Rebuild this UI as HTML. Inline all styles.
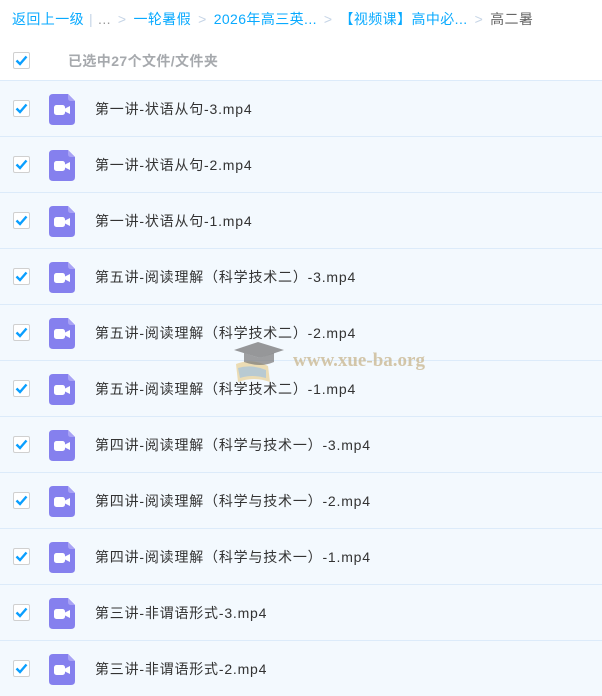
<!DOCTYPE html>
<html><head><meta charset="utf-8"><style>
body{margin:0;width:602px;height:685px;overflow:hidden;background:#fff;font-family:"Liberation Sans","Noto Sans CJK SC",sans-serif;position:relative}
.bc{position:absolute;left:12px;top:9px;font-size:14px;color:#09aaff;white-space:nowrap;letter-spacing:0.4px}
.bc .g{color:#c5d4e6;margin:0 7px}
.bc .d{color:#666}
.cb{position:absolute;width:15px;height:15px;border:1px solid #d0d0d0;background:#fff;border-radius:2px}
.cb svg{position:absolute;left:1px;top:2px}
.sel{position:absolute;left:68px;top:51px;font-size:14px;color:#a6a9ad;font-weight:bold;letter-spacing:0.4px}
.row{position:absolute;left:0;width:602px;height:55px;background:#f3f9fe;border-top:1px solid #dcebfa}
.row .cb{left:13px;top:19px}
.ic{position:absolute;left:49px;top:13px;width:26px;height:31px}
.row .t{position:absolute;left:95px;top:18px;font-size:14px;color:#333;letter-spacing:0.8px}
.wm{position:absolute;left:293px;top:350px;font-family:"Liberation Serif",serif;font-weight:bold;font-size:19px;color:rgba(200,180,140,0.75)}
</style></head><body>
<div class="bc">返回上一级<span class="g" style="margin:0 5px">|</span><span style="color:#999">...</span><span class="g">&gt;</span>一轮暑假<span class="g">&gt;</span>2026年高三英...<span class="g">&gt;</span>【视频课】高中必...<span class="g">&gt;</span><span class="d">高二暑</span></div>
<div class="cb" style="left:13px;top:52px"><svg width="13" height="11" viewBox="0 0 13 11"><path d="M1.5 5.5 L5 9 L11.5 1.5" stroke="#0a9fff" stroke-width="2.4" fill="none"/></svg></div>
<div class="sel">已选中27个文件/文件夹</div>
<div id="rows"></div>
<div class="wm">www.xue-ba.org</div>
<svg style="position:absolute;left:232px;top:338px" width="56" height="50" viewBox="0 0 56 50"><path d="M4 26 Q20 20 36 28 L38 44 Q22 38 6 44Z" fill="rgba(230,200,130,0.6)"/><path d="M6 30 Q20 26 34 32 L34 40 Q20 36 8 40Z" fill="rgba(150,190,230,0.6)"/><path d="M2 12 L26 4 L52 12 L28 20Z" fill="rgba(110,110,110,0.7)"/><path d="M12 15 L12 24 Q28 30 42 24 L42 15 L28 20Z" fill="rgba(120,120,120,0.7)"/></svg>
<script>
var n=["第一讲-状语从句-3.mp4","第一讲-状语从句-2.mp4","第一讲-状语从句-1.mp4","第五讲-阅读理解（科学技术二）-3.mp4","第五讲-阅读理解（科学技术二）-2.mp4","第五讲-阅读理解（科学技术二）-1.mp4","第四讲-阅读理解（科学与技术一）-3.mp4","第四讲-阅读理解（科学与技术一）-2.mp4","第四讲-阅读理解（科学与技术一）-1.mp4","第三讲-非谓语形式-3.mp4","第三讲-非谓语形式-2.mp4"];
var h="";n.forEach(function(t,i){h+='<div class="row" style="top:'+(80+i*56)+'px"><div class="cb"><svg width="13" height="11" viewBox="0 0 13 11"><path d="M1.5 5.5 L5 9 L11.5 1.5" stroke="#0a9fff" stroke-width="2.4" fill="none"/></svg></div><svg class="ic" viewBox="0 0 26 31"><path d="M4 0 H19 L26 7 V27 Q26 31 22 31 H4 Q0 31 0 27 V4 Q0 0 4 0Z" fill="#8580ee"/><path d="M19 0 L26 7 H22 Q19 7 19 4Z" fill="#a9a3f5"/><rect x="5" y="11" width="11" height="10" rx="2.5" fill="#fff"/><path d="M16 14.5 L21 12 V20 L16 17.5Z" fill="#fff"/></svg><div class="t">'+t+'</div></div>'});
document.getElementById("rows").innerHTML=h;
</script>
</body></html>
